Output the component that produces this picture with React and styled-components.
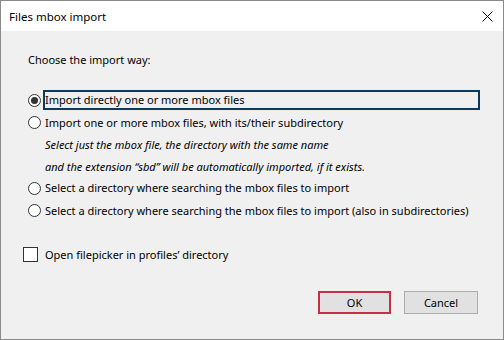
import React from 'react';
import styled, { createGlobalStyle } from 'styled-components';

const GlobalStyle = createGlobalStyle`
  html, body {
    margin: 0;
    padding: 0;
    background: #f0f0f0;
  }
  * {
    box-sizing: border-box;
  }
`;

const Window = styled.div`
  width: 504px;
  height: 340px;
  border: 1px solid #8a8a8a;
  display: flex;
  flex-direction: column;
  font-family: "Noto Sans", "Segoe UI", sans-serif;
  font-size: 11px;
  color: #000;
  background: #f0f0f0;
`;

const TitleBar = styled.div`
  height: 30px;
  background: #fff;
  display: flex;
  align-items: center;
  justify-content: space-between;
  padding: 0 10px 0 8px;
  font-size: 11.5px;
`;

const CloseButton = styled.div`
  width: 12px;
  height: 12px;
  display: flex;
  align-items: center;
  justify-content: center;
`;

const Body = styled.div`
  flex: 1;
  display: flex;
  flex-direction: column;
  padding: 21px 25px 25px 22px;
`;

const Prompt = styled.div`
  margin-left: 5px;
  line-height: 16px;
`;

const OptionList = styled.div`
  margin: 21px -2px 0 5px;
  display: flex;
  flex-direction: column;
`;

const OptionRow = styled.label`
  display: flex;
  align-items: center;
  height: 22.5px;
`;

const RadioCircle = styled.span`
  width: 13px;
  height: 13px;
  border-radius: 50%;
  border: 1px solid #333;
  background: #fff;
  display: flex;
  align-items: center;
  justify-content: center;
  flex-shrink: 0;

  &::after {
    content: '';
    width: 7px;
    height: 7px;
    border-radius: 50%;
    background: ${p => (p.$checked ? '#333' : 'transparent')};
  }
`;

const OptionText = styled.span`
  margin-left: 2px;
  height: 20px;
  line-height: 16px;
  padding: 0 2px 0 0;
  border: 2px solid ${p => (p.$focused ? '#0b3a5c' : 'transparent')};
  flex: ${p => (p.$focused ? 1 : '0 0 auto')};
  white-space: nowrap;
`;

const Note = styled.div`
  padding-left: 17px;
  font-style: italic;
  line-height: 21.5px;
`;

const CheckRow = styled.label`
  display: flex;
  align-items: center;
  gap: 7px;
  margin-top: 25px;
`;

const CheckBox = styled.span`
  width: 15px;
  height: 15px;
  border: 1px solid #333;
  background: #fff;
  flex-shrink: 0;
`;

const ButtonRow = styled.div`
  margin-top: auto;
  display: flex;
  justify-content: flex-end;
  gap: 13px;
`;

const Button = styled.button`
  width: ${p => (p.$wide ? '74px' : '73px')};
  height: 23px;
  padding: 0;
  font-family: inherit;
  font-size: 11px;
  color: #000;
  background: #e1e1e1;
  border: ${p => (p.$default ? '2px solid #c4304a' : '1px solid #adadad')};
`;

const options = [
  { label: 'Import directly one or more mbox files', checked: true },
  {
    label: 'Import one or more mbox files, with its/their subdirectory',
    note: [
      'Select just the mbox file, the directory with the same name',
      'and the extension \u201csbd\u201d will be automatically imported, if it exists.',
    ],
  },
  { label: 'Select a directory where searching the mbox files to import' },
  { label: 'Select a directory where searching the mbox files to import (also in subdirectories)' },
];

export default function App() {
  return (
    <>
      <GlobalStyle />
      <Window>
        <TitleBar>
          <span>Files mbox import</span>
          <CloseButton>
            <svg width="11" height="11" viewBox="0 0 11 11">
              <path d="M0.5 0.5 L10.5 10.5 M10.5 0.5 L0.5 10.5" stroke="#000" strokeWidth="1" fill="none" />
            </svg>
          </CloseButton>
        </TitleBar>
        <Body>
          <Prompt>Choose the import way:</Prompt>
          <OptionList>
            {options.map(opt => (
              <React.Fragment key={opt.label}>
                <OptionRow>
                  <RadioCircle $checked={opt.checked} />
                  <OptionText $focused={opt.checked}>{opt.label}</OptionText>
                </OptionRow>
                {opt.note && (
                  <Note>
                    {opt.note.map(line => (
                      <div key={line}>{line}</div>
                    ))}
                  </Note>
                )}
              </React.Fragment>
            ))}
          </OptionList>
          <CheckRow>
            <CheckBox />
            <span>Open filepicker in profiles’ directory</span>
          </CheckRow>
          <ButtonRow>
            <Button $default>OK</Button>
            <Button $wide>Cancel</Button>
          </ButtonRow>
        </Body>
      </Window>
    </>
  );
}
